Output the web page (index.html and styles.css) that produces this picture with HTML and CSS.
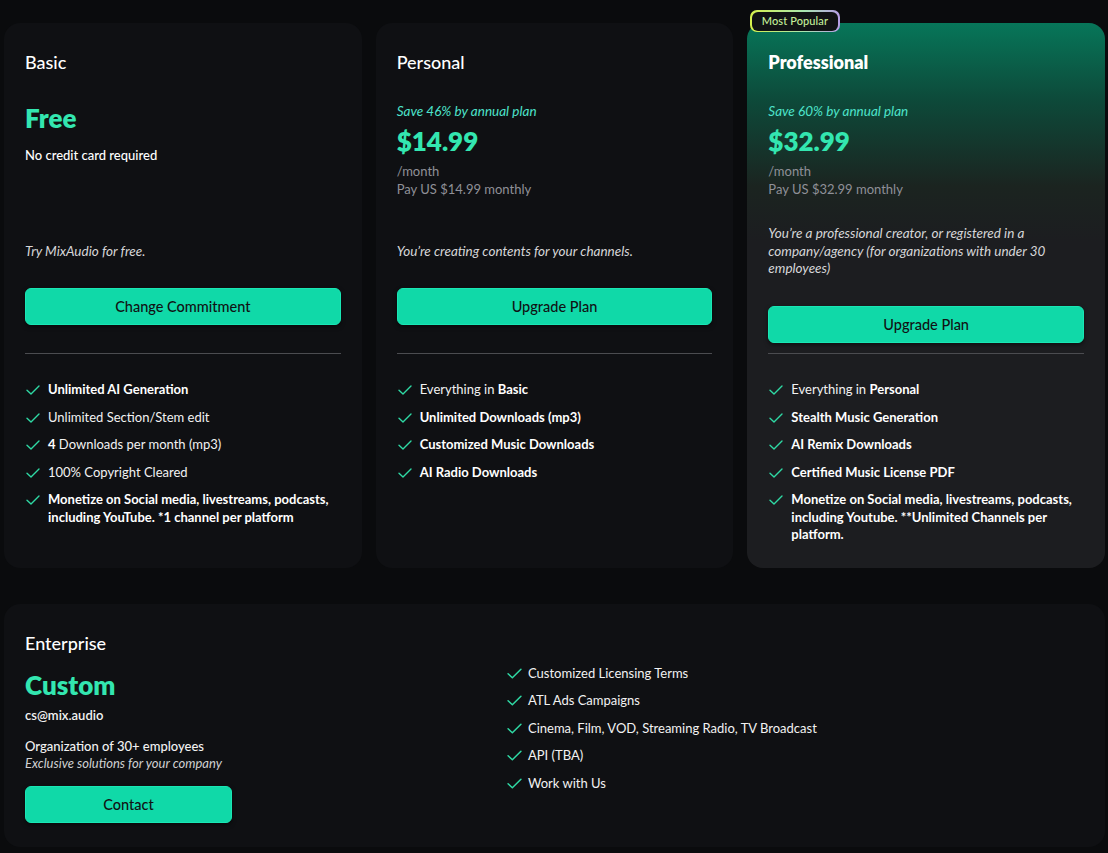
FILE: index.html
```html
<!DOCTYPE html>
<html lang="en">
<head>
<meta charset="utf-8">
<title>Pricing</title>
<link rel="stylesheet" href="styles.css">
</head>
<body>
<main class="page">
  <section class="plans">
    <article class="card">
      <div class="head">
        <h2 class="title">Basic</h2>
        <div class="price-block">
          <div class="price free">Free</div>
          <div class="note">No credit card required</div>
        </div>
        <div class="desc"><p>Try MixAudio for free.</p></div>
        <button class="btn">Change Commitment</button>
      </div>
      <hr class="divider">
      <ul class="features">
        <li><svg class="check" viewBox="0 0 14 10"><path d="M1 5.2 L5 9 L13 1"/></svg><span><b>Unlimited AI Generation</b></span></li>
        <li><svg class="check" viewBox="0 0 14 10"><path d="M1 5.2 L5 9 L13 1"/></svg><span>Unlimited Section/Stem edit</span></li>
        <li><svg class="check" viewBox="0 0 14 10"><path d="M1 5.2 L5 9 L13 1"/></svg><span><b>4</b> Downloads per month (mp3)</span></li>
        <li><svg class="check" viewBox="0 0 14 10"><path d="M1 5.2 L5 9 L13 1"/></svg><span>100% Copyright Cleared</span></li>
        <li><svg class="check" viewBox="0 0 14 10"><path d="M1 5.2 L5 9 L13 1"/></svg><span><b>Monetize on Social media, livestreams, podcasts, including YouTube. *1 channel per platform</b></span></li>
      </ul>
    </article>

    <article class="card">
      <div class="head">
        <h2 class="title">Personal</h2>
        <div class="price-block">
          <div class="save">Save 46% by annual plan</div>
          <div class="price">$14.99</div>
          <div class="period">/month<br>Pay US $14.99 monthly</div>
        </div>
        <div class="desc"><p>You’re creating contents for your channels.</p></div>
        <button class="btn">Upgrade Plan</button>
      </div>
      <hr class="divider">
      <ul class="features">
        <li><svg class="check" viewBox="0 0 14 10"><path d="M1 5.2 L5 9 L13 1"/></svg><span>Everything in <b>Basic</b></span></li>
        <li><svg class="check" viewBox="0 0 14 10"><path d="M1 5.2 L5 9 L13 1"/></svg><span><b>Unlimited Downloads (mp3)</b></span></li>
        <li><svg class="check" viewBox="0 0 14 10"><path d="M1 5.2 L5 9 L13 1"/></svg><span><b>Customized Music Downloads</b></span></li>
        <li><svg class="check" viewBox="0 0 14 10"><path d="M1 5.2 L5 9 L13 1"/></svg><span><b>AI Radio Downloads</b></span></li>
      </ul>
    </article>

    <article class="card pro">
      <span class="badge"><span class="badge-text">Most Popular</span></span>
      <div class="head">
        <h2 class="title strong">Professional</h2>
        <div class="price-block">
          <div class="save">Save 60% by annual plan</div>
          <div class="price">$32.99</div>
          <div class="period">/month<br>Pay US $32.99 monthly</div>
        </div>
        <div class="desc"><p>You’re a professional creator, or registered in a company/agency (for organizations with under 30 employees)</p></div>
        <button class="btn">Upgrade Plan</button>
      </div>
      <hr class="divider">
      <ul class="features">
        <li><svg class="check" viewBox="0 0 14 10"><path d="M1 5.2 L5 9 L13 1"/></svg><span>Everything in <b>Personal</b></span></li>
        <li><svg class="check" viewBox="0 0 14 10"><path d="M1 5.2 L5 9 L13 1"/></svg><span><b>Stealth Music Generation</b></span></li>
        <li><svg class="check" viewBox="0 0 14 10"><path d="M1 5.2 L5 9 L13 1"/></svg><span><b>AI Remix Downloads</b></span></li>
        <li><svg class="check" viewBox="0 0 14 10"><path d="M1 5.2 L5 9 L13 1"/></svg><span><b>Certified Music License PDF</b></span></li>
        <li><svg class="check" viewBox="0 0 14 10"><path d="M1 5.2 L5 9 L13 1"/></svg><span><b>Monetize on Social media, livestreams, podcasts, including Youtube. **Unlimited Channels per platform.</b></span></li>
      </ul>
    </article>
  </section>

  <section class="card enterprise">
    <div class="ent-left">
      <h2 class="title">Enterprise</h2>
      <div class="price custom">Custom</div>
      <div class="email">cs@mix.audio</div>
      <div class="org">Organization of 30+ employees</div>
      <div class="org-sub">Exclusive solutions for your company</div>
      <button class="btn btn-small">Contact</button>
    </div>
    <ul class="features ent-features">
      <li><svg class="check" viewBox="0 0 14 10"><path d="M1 5.2 L5 9 L13 1"/></svg><span>Customized Licensing Terms</span></li>
      <li><svg class="check" viewBox="0 0 14 10"><path d="M1 5.2 L5 9 L13 1"/></svg><span>ATL Ads Campaigns</span></li>
      <li><svg class="check" viewBox="0 0 14 10"><path d="M1 5.2 L5 9 L13 1"/></svg><span>Cinema, Film, VOD, Streaming Radio, TV Broadcast</span></li>
      <li><svg class="check" viewBox="0 0 14 10"><path d="M1 5.2 L5 9 L13 1"/></svg><span>API (TBA)</span></li>
      <li><svg class="check" viewBox="0 0 14 10"><path d="M1 5.2 L5 9 L13 1"/></svg><span>Work with Us</span></li>
    </ul>
  </section>
</main>
</body>
</html>
```
FILE: styles.css
```css
* { box-sizing: border-box; }

html, body {
  margin: 0;
  padding: 0;
  background: #0a0b0d;
}

body {
  font-family: "Lato", "Inter", "Noto Sans", sans-serif;
  color: #f2f2f2;
  font-size: 13px;
  overflow: hidden;
}

.page {
  padding: 23px 3px 0 4px;
}

.plans {
  display: grid;
  grid-template-columns: repeat(3, 1fr);
  gap: 14px;
}

.card {
  position: relative;
  background: #0f1013;
  border-radius: 16px;
  padding: 27px 21px 24px;
}

.pro {
  background: linear-gradient(180deg, #077659 0%, #0d4a3a 14%, #1b2420 30%, #1c1d20 40%, #1c1d20 100%);
}

.badge {
  position: absolute;
  top: -13px;
  left: 3px;
  padding: 1.5px;
  border-radius: 7px;
  background: linear-gradient(90deg, #d6f04c 0%, #a8e6b0 60%, #b79de6 100%);
}

.badge-text {
  display: block;
  background: #111214;
  border-radius: 6px;
  padding: 2px 10px 3px;
  font-size: 11px;
  line-height: 14px;
  font-weight: 500;
  color: #c4ef9a;
  letter-spacing: 0.1px;
}

.head {
  height: 303px;
  display: flex;
  flex-direction: column;
}

.title {
  margin: 0;
  font-size: 18px;
  line-height: 24px;
  font-weight: 500;
  color: #fff;
}

.title.strong { font-weight: 800; }

.price-block {
  height: 151px;
  padding-top: 28px;
  flex: none;
}

.save {
  font-style: italic;
  color: #4de3cb;
  font-size: 13.5px;
  line-height: 18px;
  margin-bottom: 5px;
}

.price {
  font-size: 26px;
  line-height: 32px;
  font-weight: 800;
  color: #33e6b0;
}

.note {
  margin-top: 12px;
  font-weight: 500;
  font-size: 13px;
  line-height: 18px;
  color: #fff;
}

.period {
  margin-top: 6px;
  color: #8f9098;
  font-size: 13px;
  line-height: 17.5px;
}

.desc {
  min-height: 35px;
  display: flex;
  flex-direction: column;
  justify-content: flex-end;
  flex: none;
}

.desc p {
  margin: 0;
  font-style: italic;
  color: #d6d6d8;
  line-height: 17.5px;
  font-size: 13.5px;
}

.btn {
  margin-top: 28px;
  height: 37px;
  width: 100%;
  flex: none;
  border: 1px solid #19e6b4;
  border-radius: 6px;
  background: #10d9a8;
  color: #101214;
  font-family: inherit;
  font-size: 14.5px;
  font-weight: 500;
  box-shadow: 0 2px 4px rgba(0,0,0,0.5);
}

.divider {
  margin: 0;
  border: 0;
  height: 1px;
  background: #4b4c50;
}

.features {
  list-style: none;
  margin: 27px 0 0;
  padding: 0;
  display: flex;
  flex-direction: column;
  gap: 10px;
}

.features li {
  display: flex;
  align-items: flex-start;
  gap: 8px;
  line-height: 17.5px;
  font-size: 13px;
  color: #f2f2f2;
}

.features b { font-weight: 700; color: #fff; }

.check {
  flex: none;
  width: 14px;
  height: 10px;
  margin-top: 4px;
  margin-left: 1px;
  fill: none;
  stroke: #2fd9a4;
  stroke-width: 1.4;
  stroke-linecap: round;
  stroke-linejoin: round;
}

.enterprise {
  margin-top: 36px;
  display: grid;
  grid-template-columns: 481px 1fr;
  align-items: center;
}

.custom {
  margin-top: 14px;
}

.email {
  margin-top: 5px;
  font-weight: 600;
  line-height: 18px;
}

.org {
  margin-top: 14px;
  font-weight: 500;
  line-height: 17.5px;
}

.org-sub {
  font-style: italic;
  color: #d0d0d2;
  line-height: 17.5px;
}

.btn-small {
  width: 207px;
  margin-top: 13px;
}

.ent-features {
  margin: 0;
  padding-top: 4px;
}

.ent-features .check {
  width: 15px;
  height: 11px;
  margin-top: 3px;
}

.ent-features li {
  gap: 6px;
}
```
